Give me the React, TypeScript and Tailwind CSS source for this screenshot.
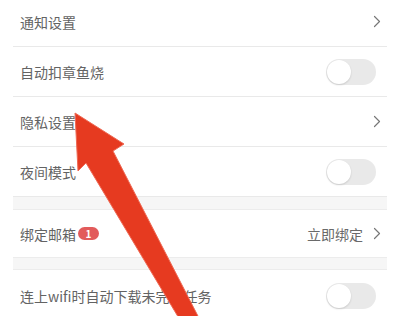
import React from "react";

function Chevron() {
  return (
    <svg width="8" height="13" viewBox="0 0 8 13" className="shrink-0">
      <path d="M1.5 1.5 L6.5 6.5 L1.5 11.5" fill="none" stroke="#777777" strokeWidth="1.2" strokeLinecap="round" strokeLinejoin="round" />
    </svg>
  );
}

function Toggle() {
  return (
    <div className="w-[50px] h-[26px] rounded-full bg-[#e9e9e9] relative shrink-0 mr-[5px]">
      <div className="absolute left-[1px] top-[1px] w-[24px] h-[24px] rounded-full bg-white shadow-[0_1px_2px_rgba(0,0,0,0.14)]" />
    </div>
  );
}

function Row({ label, right, h, badge, divider = true }: { label: string; right: React.ReactNode; h: string; badge?: string; divider?: boolean }) {
  return (
    <div className={`flex items-center justify-between pl-[7px] pr-[6px] ${h} ${divider ? "border-b border-[#e9e9e9]" : ""}`}>
      <div className="flex items-center">
        <span className="text-[14px] text-[#636363] leading-none">{label}</span>
        {badge && (
          <span className="ml-[2px] w-[21px] h-[13px] rounded-full bg-[#e25b5b] text-white text-[10px] leading-none flex items-center justify-center font-bold">
            {badge}
          </span>
        )}
      </div>
      {right}
    </div>
  );
}

export default function App() {
  return (
    <div className="relative w-[397px] h-[316px] overflow-hidden bg-white font-['Noto_Sans_CJK_SC','Noto_Sans',sans-serif]">
      <div className="ml-[13px] mr-[10px] -mt-[3px] flex flex-col">
        <Row label="通知设置" h="h-[50px]" right={<Chevron />} />
        <Row label="自动扣章鱼烧" h="h-[50px]" right={<Toggle />} />
        <Row label="隐私设置" h="h-[50px]" right={<Chevron />} />
        <Row label="夜间模式" h="h-[50px]" right={<Toggle />} />
        <div className="h-[13px] bg-[#f6f6f6] border-b border-[#ececec]" />
        <Row
          label="绑定邮箱"
          badge="1"
          h="h-[47px]"
          divider={false}
          right={
            <div className="flex items-center gap-[10px]">
              <span className="text-[14px] text-[#6a6a6a] leading-none">立即绑定</span>
              <Chevron />
            </div>
          }
        />
        <div className="h-[13px] bg-[#f6f6f6] border-y border-[#ececec]" />
        <Row label="连上wifi时自动下载未完成任务" h="h-[52px]" divider={false} right={<Toggle />} />
      </div>
      <svg className="absolute left-0 top-0 pointer-events-none" width="397" height="316" viewBox="0 0 397 316">
        <polygon points="75,113 124,144 113,151 200,320 180,320 86,163 78,171" fill="#e63a20" stroke="#ee6a55" strokeWidth="1" strokeLinejoin="round" />
      </svg>
    </div>
  );
}
